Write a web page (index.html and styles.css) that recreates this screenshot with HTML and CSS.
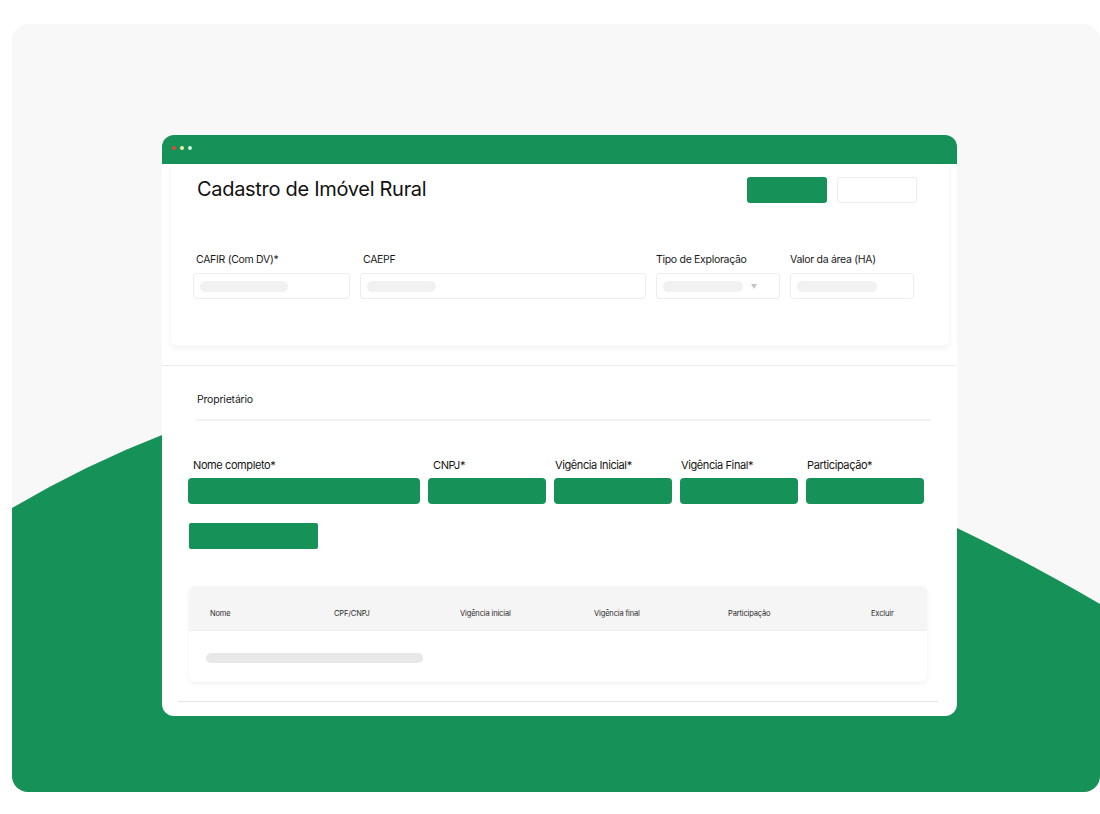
FILE: index.html
```html
<!DOCTYPE html>
<html lang="pt-BR">
<head>
<meta charset="utf-8">
<title>Cadastro de Imóvel Rural</title>
<link rel="stylesheet" href="styles.css">
</head>
<body>
<div class="stage">
  <svg class="bg-shape" viewBox="0 0 1088 768" width="1088" height="768" aria-hidden="true">
    <path d="M0 484 Q75 440 150 411 C400 300 700 380 945 504 Q1012 536 1088 580 L1088 768 L0 768 Z" fill="#169157"/>
  </svg>
  <div class="window">
    <div class="titlebar">
      <span class="dot dot-red"></span>
      <span class="dot dot-yellow"></span>
      <span class="dot dot-mint"></span>
    </div>
    <div class="win-body">
      <div class="card">
        <div class="card-head">
          <h1 class="title">Cadastro de Imóvel Rural</h1>
          <div class="actions">
            <span class="btn btn-green"></span>
            <span class="btn btn-white"></span>
          </div>
        </div>
        <div class="fields">
          <div class="field f-cafir">
            <div class="label ind-3">CAFIR (Com DV)*</div>
            <div class="input"><span class="pill p-88"></span></div>
          </div>
          <div class="field f-caepf">
            <div class="label ind-3">CAEPF</div>
            <div class="input"><span class="pill p-69"></span></div>
          </div>
          <div class="field f-small">
            <div class="label">Tipo de Exploração</div>
            <div class="input select"><span class="pill p-80"></span><span class="caret"></span></div>
          </div>
          <div class="field f-small">
            <div class="label">Valor da área (HA)</div>
            <div class="input"><span class="pill p-80"></span></div>
          </div>
        </div>
      </div>
      <div class="divider"></div>
      <div class="section">
        <div class="section-title">Proprietário</div>
        <div class="section-rule"></div>
        <div class="owner-fields">
          <div class="ofield of-name">
            <div class="olabel ind-5">Nome completo*</div>
            <div class="ginput"></div>
          </div>
          <div class="ofield">
            <div class="olabel ind-5">CNPJ*</div>
            <div class="ginput"></div>
          </div>
          <div class="ofield">
            <div class="olabel">Vigência Inicial*</div>
            <div class="ginput"></div>
          </div>
          <div class="ofield">
            <div class="olabel">Vigência Final*</div>
            <div class="ginput"></div>
          </div>
          <div class="ofield">
            <div class="olabel">Participação*</div>
            <div class="ginput"></div>
          </div>
        </div>
        <div class="add-btn"></div>
        <div class="table">
          <div class="thead">
            <span>Nome</span>
            <span>CPF/CNPJ</span>
            <span>Vigência inicial</span>
            <span>Vigência final</span>
            <span>Participação</span>
            <span>Excluir</span>
          </div>
          <div class="tbody">
            <span class="row-pill"></span>
          </div>
        </div>
      </div>
      <div class="bottom-line"></div>
    </div>
  </div>
</div>
</body>
</html>
```

FILE: styles.css
```css
* { box-sizing: border-box; }

html, body {
  margin: 0;
  padding: 0;
  background: #ffffff;
  font-family: Inter, "Noto Sans", "Liberation Sans", sans-serif;
  color: #141414;
}

.stage {
  position: relative;
  margin: 24px 0 0 12px;
  width: 1088px;
  height: 768px;
  border-radius: 16px;
  background: #f8f8f8;
  overflow: hidden;
  padding: 111px 0 0 150px;
}

.bg-shape {
  position: absolute;
  left: 0;
  top: 0;
  display: block;
}

.window {
  position: relative;
  width: 795px;
  height: 581px;
  border-radius: 12px;
  background: #ffffff;
  overflow: hidden;
}

.titlebar {
  height: 29px;
  background: #169157;
  display: flex;
  align-items: center;
  gap: 4px;
  padding: 0 0 3px 10px;
}

.dot {
  width: 4px;
  height: 4px;
  border-radius: 50%;
}
.dot-red { background: #e8453c; }
.dot-yellow { background: #f1efb0; }
.dot-mint { background: #d3f3e8; }

.win-body {
  display: flex;
  flex-direction: column;
}

.card {
  margin: 0 8px 0 9px;
  padding: 12px 32px 47px 22px;
  background: #ffffff;
  border-radius: 0 0 6px 6px;
  box-shadow: 0 3px 6px rgba(0, 0, 0, 0.05), 0 0 2px rgba(0, 0, 0, 0.03);
}

.card-head {
  display: flex;
  justify-content: space-between;
  align-items: center;
  height: 27px;
}

.title {
  margin: 0;
  padding-left: 4px;
  font-size: 20px;
  font-weight: 400;
  letter-spacing: -0.3px;
  color: #111111;
  line-height: 27px;
}

.actions {
  display: flex;
  gap: 10px;
}

.btn {
  display: block;
  width: 80px;
  height: 26px;
  border-radius: 3px;
}
.btn-green { background: #169157; }
.btn-white { background: #ffffff; border: 1px solid #ececec; }

.fields {
  display: flex;
  gap: 10px;
  margin-top: 50px;
}

.field { display: flex; flex-direction: column; }
.f-cafir { width: 157px; }
.f-caepf { width: 286px; }
.f-small { width: 124px; }

.label {
  font-size: 10.5px;
  line-height: 14px;
  letter-spacing: -0.3px;
  margin-bottom: 6px;
  color: #1a1a1a;
}

.ind-3 { padding-left: 3px; }
.ind-5 { padding-left: 5px; }

.input {
  height: 26px;
  border: 1px solid #ededed;
  border-radius: 3px;
  display: flex;
  align-items: center;
  padding-left: 6px;
}

.select {
  justify-content: space-between;
  padding-right: 22px;
}

.pill {
  display: block;
  height: 11px;
  border-radius: 6px;
  background: #f1f1f1;
}
.p-88 { width: 88px; }
.p-69 { width: 69px; }
.p-80 { width: 80px; }

.caret {
  width: 0;
  height: 0;
  border-left: 3px solid transparent;
  border-right: 3px solid transparent;
  border-top: 5px solid #c4c4c4;
}

.divider {
  margin-top: 19px;
  height: 1px;
  background: #ececec;
}

.section {
  padding: 27px 26px 0 26px;
}

.section-title {
  padding-left: 9px;
  font-size: 10.5px;
  line-height: 14px;
  letter-spacing: -0.2px;
  color: #1a1a1a;
}

.section-rule {
  margin: 12px 0 0 8px;
  height: 2px;
  background: #f2f2f2;
}

.owner-fields {
  display: flex;
  gap: 8px;
  margin-top: 37px;
}

.ofield { width: 118px; display: flex; flex-direction: column; }
.of-name { width: 232px; }

.olabel {
  font-size: 11px;
  line-height: 14px;
  letter-spacing: -0.4px;
  padding-left: 1px;
  margin-bottom: 6px;
  color: #141414;
}
.olabel.ind-5 { padding-left: 5px; }

.ginput {
  height: 26px;
  border-radius: 4px;
  background: #169157;
}

.add-btn {
  margin: 19px 0 0 1px;
  width: 129px;
  height: 26px;
  border-radius: 2px;
  background: #169157;
}

.table {
  margin: 37px 4px 0 1px;
  border-radius: 6px;
  background: #ffffff;
  box-shadow: 0 2px 5px rgba(0, 0, 0, 0.05), 0 0 1px rgba(0, 0, 0, 0.06);
  overflow: hidden;
}

.thead {
  height: 45px;
  background: #f5f5f5;
  border-bottom: 1px solid #eeeeee;
  display: grid;
  grid-template-columns: 124px 126px 134px 134px 143px auto;
  align-items: center;
  padding: 10px 0 0 21px;
  font-size: 7.5px;
  letter-spacing: -0.15px;
  color: #2a2a2a;
}

.tbody {
  height: 51px;
  padding: 22px 0 0 17px;
}

.row-pill {
  display: block;
  width: 217px;
  height: 10px;
  border-radius: 5px;
  background: #e8e8e8;
}

.bottom-line {
  margin: 19px 19px 0 16px;
  height: 1px;
  background: #e4e4e4;
}
```
